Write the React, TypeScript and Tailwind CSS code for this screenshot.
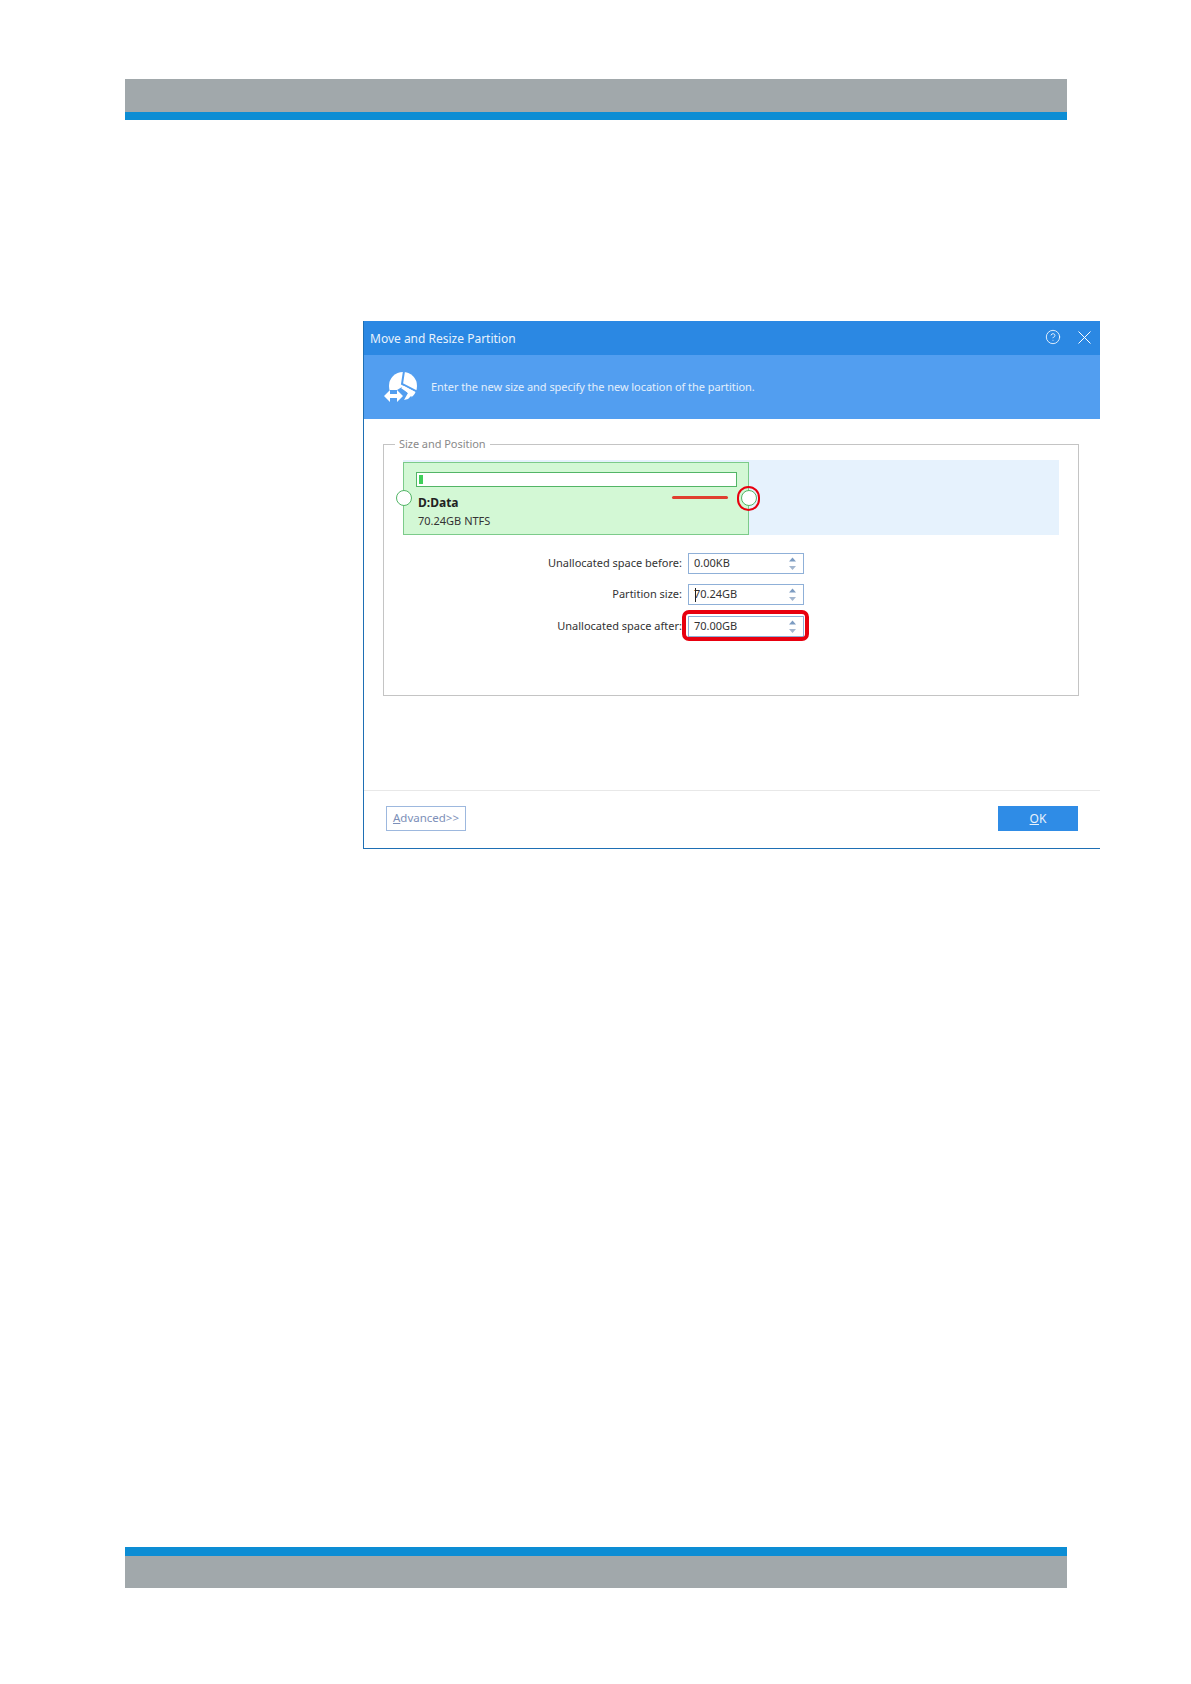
import React from "react";
import { CircleHelp } from "lucide-react";

const uiFont = "font-['Noto_Sans',sans-serif]";

function Spinner() {
  return (
    <svg width="9" height="14" viewBox="0 0 9 14" className="shrink-0">
      <path d="M4.5 0.5 L8 4.5 L1 4.5 Z" fill="#7d9cc2" />
      <path d="M1 9 L8 9 L4.5 13 Z" fill="#a3b6cf" />
    </svg>
  );
}

function SpinField({ label, value, caret, highlight, className }: { label: string; value: string; caret?: boolean; highlight?: boolean; className?: string }) {
  return (
    <div className={`flex items-center justify-end gap-[6px] w-[401px] ${className ?? ""}`}>
      <span className="text-[11px] leading-none -mt-[2px] text-[#333] whitespace-nowrap">{label}</span>
      <div className="relative flex items-center justify-between w-[116px] h-[21px] border border-[#8fb0d8] pl-[5px] pr-[6px] bg-white">
        <span className="text-[11px] leading-none -mt-[2px] text-[#333]">{value}</span>
        {caret && <span className="absolute left-[6px] top-[3px] w-px h-[14px] bg-[#222]" />}
        <Spinner />
        {highlight && <span className="absolute -left-[7px] -top-[7px] -right-[6px] -bottom-[5px] border-[4px] border-[#e8000f] rounded-[7px]" />}
      </div>
    </div>
  );
}

function DiskIcon() {
  return (
    <svg width="34" height="30" viewBox="0 0 34 30" className="shrink-0">
      <circle cx="19" cy="14" r="14" fill="#fff" />
      <path d="M20 -1 L18 12 L34 20" fill="none" stroke="#529ef0" strokeWidth="2" />
      <path d="M0 18 H13 L18 15 L28 25 L22 31 H0 Z" fill="#529ef0" />
      <path d="M20 14 L31 20 L24 27 L20 28 L24 21 L17 16 Z" fill="#fff" />
      <path d="M0 24 L6 18 V22 H13 V18 L19 24 L13 30 V26 H6 V30 Z" fill="#fff" />
    </svg>
  );
}

export default function App() {
  return (
    <div className={`flex flex-col h-[1684px] bg-white ${uiFont}`}>
      {/* Page header band */}
      <div className="mt-[79px] ml-[125px] w-[942px] h-[41px] bg-[#a1a8ab] border-b-[8px] border-[#0c8dd4]" />

      {/* Dialog */}
      <div className="mt-[201px] ml-[363px] w-[737px] h-[528px] flex flex-col border-l border-b border-[#1e6fb4]">
        <div className="h-[34px] bg-[#2b88e3] flex items-center justify-between pl-[6px] pr-[9px] text-white">
          <span className="text-[12px] pt-[2px] text-[#e8f2fc]">Move and Resize Partition</span>
          <div className="flex items-center gap-[17px] -mt-[2px]">
            <CircleHelp size={16} strokeWidth={1.25} />
            <svg width="13" height="13" viewBox="0 0 13 13">
              <path d="M0.5 0.5 L12.5 12.5 M12.5 0.5 L0.5 12.5" stroke="#fff" strokeWidth="1" />
            </svg>
          </div>
        </div>

        <div className="h-[64px] bg-[#529ef0] flex items-center gap-[13px] pl-[20px] text-[#e3effc]">
          <DiskIcon />
          <span className="text-[11px] -tracking-[0.05px]">Enter the new size and specify the new location of the partition.</span>
        </div>

        <div className="h-[371px] pt-[18px] pl-[19px]">
          <fieldset className="w-[696px] h-[259px] border border-[#c4c4c4] pl-[19px]">
            <legend className="-ml-[8px] px-[4px] text-[11px] leading-[14px] text-[#8a8a8a] -tracking-[0.05px]">Size and Position</legend>
            <div className="mt-[9px] w-[656px] h-[75px] bg-[#e6f2fd]">
              <div className="relative w-[346px] h-[73px] top-[2px] border border-[#7ccb8a] bg-[#d3f8d5] pt-[9px] pl-[14px]">
                <div className="-ml-[2px] w-[321px] h-[15px] border border-[#52b566] bg-white p-[2px]">
                  <div className="w-[4px] h-full bg-[#3fcf5a]" />
                </div>
                <div className="mt-[8px] text-[12px] leading-[16px] font-bold text-[#222]">D:Data</div>
                <div className="mt-[2px] text-[11px] leading-[16px] text-[#333]">70.24GB NTFS</div>

                <span className="absolute -left-[8px] top-[27px] w-[16px] h-[16px] rounded-full border border-[#52b566] bg-white" />
                <span className="absolute left-[268px] top-[33px] w-[56px] h-[3px] rounded-full bg-[#e0402f]" />
                <span className="absolute -right-[9px] top-[27px] w-[16px] h-[16px] rounded-full border border-[#52b566] bg-white" />
                <span className="absolute -right-[12px] top-[23px] w-[23px] h-[25px] rounded-full border-[2px] border-[#e8000f]" />
              </div>
            </div>

            <SpinField className="mt-[18px]" label="Unallocated space before:" value="0.00KB" />
            <SpinField className="mt-[10px]" label="Partition size:" value="70.24GB" caret />
            <SpinField className="mt-[11px]" label="Unallocated space after:" value="70.00GB" highlight />
          </fieldset>
        </div>

        <div className="flex-1 border-t border-[#e8e8e8] flex items-start justify-between pt-[15px] pl-[22px] pr-[22px]">
          <button className="w-[80px] h-[25px] border border-[#9db8de] pb-[2px] text-[11.5px] text-[#7d8fb8]">
            <span className="underline">A</span>dvanced&gt;&gt;
          </button>
          <button className="w-[80px] h-[25px] bg-[#2f8ce6] text-[12px] text-[#e8f2fc]">
            <span className="underline">O</span>K
          </button>
        </div>
      </div>

      {/* Page footer band */}
      <div className="mt-auto mb-[96px] ml-[125px] w-[942px] h-[41px] bg-[#a1a8ab] border-t-[9px] border-[#0c8dd4]" />
    </div>
  );
}
